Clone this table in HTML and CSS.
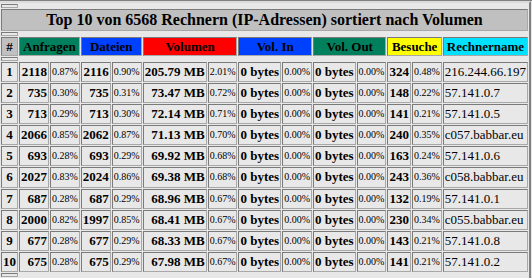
FILE: index.html
```html
<!DOCTYPE html>
<html lang="de">
<head>
<meta charset="utf-8">
<title>Top 10 Rechner</title>
<link rel="stylesheet" href="styles.css">
</head>
<body>
<div class="prev-edge"></div>
<table class="stats">
<tr><th class="spacer"></th></tr>
<tr><th class="title" colspan="15">Top 10 von 6568 Rechnern (IP-Adressen) sortiert nach Volumen</th></tr>
<tr><th class="spacer"></th></tr>
<tr class="head">
<th class="c-gray">#</th>
<th class="c-green" colspan="2">Anfragen</th>
<th class="c-blue" colspan="2">Dateien</th>
<th class="c-red" colspan="2">Volumen</th>
<th class="c-blue" colspan="2">Vol. In</th>
<th class="c-green" colspan="2">Vol. Out</th>
<th class="c-yellow" colspan="2">Besuche</th>
<th class="c-cyan">Rechnername</th>
</tr>
<tr><th class="spacer"></th></tr>
<tr><td class="n">1</td><td class="v">2118</td><td class="p">0.87%</td><td class="v">2116</td><td class="p">0.90%</td><td class="v">205.79 MB</td><td class="p">2.01%</td><td class="v">0 bytes</td><td class="p">0.00%</td><td class="v">0 bytes</td><td class="p">0.00%</td><td class="v">324</td><td class="p">0.48%</td><td class="h">216.244.66.197</td></tr>
<tr><td class="n">2</td><td class="v">735</td><td class="p">0.30%</td><td class="v">735</td><td class="p">0.31%</td><td class="v">73.47 MB</td><td class="p">0.72%</td><td class="v">0 bytes</td><td class="p">0.00%</td><td class="v">0 bytes</td><td class="p">0.00%</td><td class="v">148</td><td class="p">0.22%</td><td class="h">57.141.0.7</td></tr>
<tr><td class="n">3</td><td class="v">713</td><td class="p">0.29%</td><td class="v">713</td><td class="p">0.30%</td><td class="v">72.14 MB</td><td class="p">0.71%</td><td class="v">0 bytes</td><td class="p">0.00%</td><td class="v">0 bytes</td><td class="p">0.00%</td><td class="v">141</td><td class="p">0.21%</td><td class="h">57.141.0.5</td></tr>
<tr><td class="n">4</td><td class="v">2066</td><td class="p">0.85%</td><td class="v">2062</td><td class="p">0.87%</td><td class="v">71.13 MB</td><td class="p">0.70%</td><td class="v">0 bytes</td><td class="p">0.00%</td><td class="v">0 bytes</td><td class="p">0.00%</td><td class="v">240</td><td class="p">0.35%</td><td class="h">c057.babbar.eu</td></tr>
<tr><td class="n">5</td><td class="v">693</td><td class="p">0.28%</td><td class="v">693</td><td class="p">0.29%</td><td class="v">69.92 MB</td><td class="p">0.68%</td><td class="v">0 bytes</td><td class="p">0.00%</td><td class="v">0 bytes</td><td class="p">0.00%</td><td class="v">163</td><td class="p">0.24%</td><td class="h">57.141.0.6</td></tr>
<tr><td class="n">6</td><td class="v">2027</td><td class="p">0.83%</td><td class="v">2024</td><td class="p">0.86%</td><td class="v">69.38 MB</td><td class="p">0.68%</td><td class="v">0 bytes</td><td class="p">0.00%</td><td class="v">0 bytes</td><td class="p">0.00%</td><td class="v">243</td><td class="p">0.36%</td><td class="h">c058.babbar.eu</td></tr>
<tr><td class="n">7</td><td class="v">687</td><td class="p">0.28%</td><td class="v">687</td><td class="p">0.29%</td><td class="v">68.96 MB</td><td class="p">0.67%</td><td class="v">0 bytes</td><td class="p">0.00%</td><td class="v">0 bytes</td><td class="p">0.00%</td><td class="v">132</td><td class="p">0.19%</td><td class="h">57.141.0.1</td></tr>
<tr><td class="n">8</td><td class="v">2000</td><td class="p">0.82%</td><td class="v">1997</td><td class="p">0.85%</td><td class="v">68.41 MB</td><td class="p">0.67%</td><td class="v">0 bytes</td><td class="p">0.00%</td><td class="v">0 bytes</td><td class="p">0.00%</td><td class="v">230</td><td class="p">0.34%</td><td class="h">c055.babbar.eu</td></tr>
<tr><td class="n">9</td><td class="v">677</td><td class="p">0.28%</td><td class="v">677</td><td class="p">0.29%</td><td class="v">68.33 MB</td><td class="p">0.67%</td><td class="v">0 bytes</td><td class="p">0.00%</td><td class="v">0 bytes</td><td class="p">0.00%</td><td class="v">143</td><td class="p">0.21%</td><td class="h">57.141.0.8</td></tr>
<tr><td class="n">10</td><td class="v">675</td><td class="p">0.28%</td><td class="v">675</td><td class="p">0.29%</td><td class="v">67.98 MB</td><td class="p">0.67%</td><td class="v">0 bytes</td><td class="p">0.00%</td><td class="v">0 bytes</td><td class="p">0.00%</td><td class="v">141</td><td class="p">0.21%</td><td class="h">57.141.0.2</td></tr>
<tr><th class="spacer"></th></tr>
</table>
</body>
</html>
```

FILE: styles.css
```css
html, body {
  margin: 0;
  padding: 0;
  background: #e8e8e8;
  color: #000;
  font-family: "Liberation Serif", "Times New Roman", serif;
}

.prev-edge {
  height: 1px;
  background: #808080;
}

.stats {
  margin-left: -2px;
  border-collapse: separate;
  border-spacing: 1px;
  border-width: 2px;
  border-style: solid;
  border-color: #dcdcdc #808080 #808080 #dcdcdc;
  background: #e8e8e8;
}

.stats th,
.stats td {
  padding: 1px;
  border-width: 1px;
  border-style: solid;
  border-color: #7a7a7a #a8a8a8 #a8a8a8 #7a7a7a;
  white-space: nowrap;
}

.stats th.spacer {
  padding: 1px;
  height: 0;
  line-height: 0;
  font-size: 0;
}

.stats th.title {
  background: #c0c0c0;
  font-size: 16px;
  line-height: 18px;
  font-weight: bold;
  text-align: center;
}

.head th {
  font-size: 13px;
  line-height: 15px;
  font-weight: bold;
  text-align: center;
}

.c-gray { background: #c0c0c0; }
.c-green { background: #00805c; }
.c-blue { background: #0040ff; }
.c-red { background: #ff0000; }
.c-yellow { background: #ffff00; }
.c-cyan { background: #00e0ff; }

.stats td {
  line-height: 16.1px;
  font-size: 13px;
}

.stats td.n {
  text-align: center;
  font-weight: bold;
}

.stats td.v {
  text-align: right;
  font-weight: bold;
}

.stats td.p {
  text-align: right;
  font-size: 10px;
}

.stats td.h {
  text-align: left;
}
```
